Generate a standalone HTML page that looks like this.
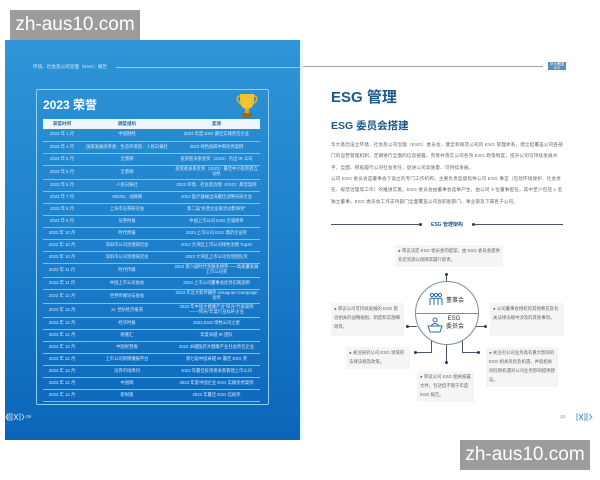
<!DOCTYPE html>
<html><head><meta charset="utf-8"><style>
*{margin:0;padding:0;box-sizing:border-box}
body{width:600px;height:480px;background:#fff;position:relative;overflow:hidden;font-family:"Liberation Sans","Noto Sans CJK SC",sans-serif}
.abs{position:absolute}
#left{left:5px;top:40px;width:295px;height:400px;background:linear-gradient(180deg,#2f95d6 0%,#1e80cc 50%,#0b64b9 100%)}
#right{left:300px;top:40px;width:300px;height:400px;background:#fff;border-left:3px solid #e6f6fb}
.wm{background:#9c9c9c;color:#fff;font-size:19px;line-height:30px;text-align:center;white-space:nowrap;overflow:hidden}
table{border-collapse:collapse;width:217px;color:#d8ecfb;font-size:4.3px;table-layout:fixed}
td{text-align:center;border-bottom:0.8px solid #7fc0ec;line-height:4.8px;height:12px;padding:0 1px}
td.tall{height:14px}
th{background:#eef6fc;color:#1a5f9c;font-size:4.5px;height:10px;font-weight:bold}
.p{font-size:4.6px;color:#666;line-height:11.3px;letter-spacing:0.15px}
.bx{background:#f3f5f7;font-size:4.4px;color:#666;line-height:9px;padding:1px 3px}
.dot{width:3px;height:3px;border-radius:50%;background:#2b3d4f;position:absolute}
.ln{background:#45586a;position:absolute}
</style></head><body>
<div id="left" class="abs"></div>
<div id="right" class="abs"></div>
<div class="abs wm" style="left:10px;top:10px;width:130px;height:30px">zh-aus10.com</div>
<div class="abs wm" style="left:460px;top:440px;width:130px;height:30px">zh-aus10.com</div>

<!-- left page -->
<div class="abs" style="left:33px;top:64px;font-size:4.6px;color:#d6ecfb">环境、社会及公司治理（ESG）报告</div>
<div class="abs" style="left:116px;top:67px;width:184px;height:0.8px;background:#8fcaf0"></div>
<div class="abs" style="left:36px;top:89px;width:233px;height:316px;border:0.8px solid #8fd0f5;border-radius:2px"></div>
<div class="abs" style="left:43px;top:96px;font-size:12px;font-weight:bold;color:#fff">2023 荣誉</div>
<svg class="abs" style="left:234px;top:91px" width="26" height="28" viewBox="0 0 26 28">
<path d="M6 3h14v7c0 5-3 8-7 8s-7-3-7-8z" fill="#f2c230"/>
<path d="M6 5c-4 0-4 6 2 8M20 5c4 0 4 6-2 8" fill="none" stroke="#e9b21e" stroke-width="1.5"/>
<rect x="11" y="18" width="4" height="4" fill="#e0a91a"/>
<rect x="8" y="22" width="10" height="5" fill="#9a6a1a"/>
</svg>
<div class="abs" style="left:43px;top:119px">
<table>
<colgroup><col style="width:38px"><col style="width:92px"><col style="width:87px"></colgroup>
<tr><th>获奖时间</th><th>颁奖组织</th><th>奖项</th></tr>
<tr><td>2023 年 1 月</td><td>中国财经</td><td>2022 年度 ESG 最佳实践责任企业</td></tr>
<tr><td>2023 年 4 月</td><td>国家发展改革委、生态环境部、人民日报社</td><td>2023 绿色低碳中和优秀案例</td></tr>
<tr><td>2023 年 5 月</td><td>全景网</td><td>投资者关系金奖（2022）杰出 IR 公司</td></tr>
<tr><td class="tall">2023 年 5 月</td><td class="tall">全景网</td><td class="tall">投资者关系金奖（2022）最佳中小投资者互动奖</td></tr>
<tr><td>2023 年 5 月</td><td>人民日报社</td><td>2023 环境、社会及治理（ESG）典型案例</td></tr>
<tr><td>2023 年 7 月</td><td>VB100、动脉网</td><td>2023 医疗器械出海最佳战略布局企业</td></tr>
<tr><td>2023 年 8 月</td><td>上海市证券研究会</td><td>第二届"民营企业家活动影响奖"</td></tr>
<tr><td>2023 年 9 月</td><td>证券时报</td><td>中国上市公司 ESG 百强榜单</td></tr>
<tr><td>2023 年 10 月</td><td>时代周报</td><td>2023 上市公司 ESG 典范企业奖</td></tr>
<tr><td>2022 年 10 月</td><td>深圳市公司治理研究会</td><td>2023 大湾区上市公司绿色治理 Top20</td></tr>
<tr><td>2023 年 10 月</td><td>深圳市公司治理研究会</td><td>2023 大湾区上市公司治理团队奖</td></tr>
<tr><td class="tall">2023 年 11 月</td><td class="tall">时代传媒</td><td class="tall">2023 第六届时代金融金榜奖——高质量发展上市公司奖</td></tr>
<tr><td>2023 年 11 月</td><td>中国上市公司协会</td><td>2023 上市公司董事会优秀实践案例</td></tr>
<tr><td class="tall">2023 年 12 月</td><td class="tall">世界传媒论坛协会</td><td class="tall">2023 年近大新传播奖 Instagram Campaign 金奖</td></tr>
<tr><td class="tall">2023 年 12 月</td><td class="tall">21 世纪经济报道</td><td class="tall">2023 年中国大健康产业"阳光"代表案例——"阳光"年度行业标杆企业</td></tr>
<tr><td>2023 年 12 月</td><td>经济时报</td><td>2023 ESG 绿色公司之星</td></tr>
<tr><td>2023 年 12 月</td><td>格隆汇</td><td>年度卓越 IR 团队</td></tr>
<tr><td>2023 年 12 月</td><td>中国经营报</td><td>2023 卓越医药大健康产业社会责任企业</td></tr>
<tr><td>2023 年 12 月</td><td>上市公司舆情播报平台</td><td>第七届中国卓越 IR 最佳 ESG 奖</td></tr>
<tr><td>2023 年 12 月</td><td>证券市场周刊</td><td>2023 年最佳投资者关系管理上市公司</td></tr>
<tr><td>2023 年 12 月</td><td>中国网</td><td>2023 年度中国企业 ESG 实践优秀案例</td></tr>
<tr><td>2023 年 12 月</td><td>新财富</td><td>2023 年最佳 ESG 信披奖</td></tr>
</table></div>
<svg class="abs" style="left:5px;top:412px" width="20" height="10" viewBox="0 0 20 10" fill="none" stroke="#cfe8fa" stroke-width="0.8">
<path d="M1 5l2-3v6zM5 1v8M7 1v8M9 2l4 6M13 2l-4 6M15 1v8M17 2l2 3-2 3"/></svg>
<div class="abs" style="left:26px;top:414px;font-size:4.6px;color:#cfe8fa">09</div>

<!-- right page -->
<div class="abs" style="left:303px;top:66px;width:240px;height:0.8px;background:#9aa7b2"></div>
<div class="abs" style="left:548px;top:62px;width:18px;height:8px;background:#5a8fc0;font-size:3.5px;color:#fff;line-height:4px;text-align:center">华大基因<br>BGI</div>
<div class="abs" style="left:331px;top:86px;font-size:15px;font-weight:bold;color:#1c5a8d">ESG 管理</div>
<div class="abs" style="left:331px;top:118px;font-size:10.5px;font-weight:bold;color:#1c5a8d">ESG 委员会搭建</div>
<div class="abs p" style="left:331px;top:139px;width:234px">华大基因设立环境、社会及公司治理（ESG）委员会，健全和规范公司的 ESG 管理体系，建立起覆盖公司各部门的运营管理机制，定期进行全面的信息披露，完善并落实公司各项 ESG 政策制度，提升公司可持续发展水平，全面、积极履行公司社会责任，促进公司高质量、可持续发展。</div>
<div class="abs p" style="left:331px;top:173px;width:234px">公司 ESG 委员会是董事会下设立的专门工作机构，主要负责监督指导公司 ESG 事宜（包括环境保护、社会责任、规范治理等工作）的推进实施。ESG 委员会由董事会选举产生，由公司 3 位董事担任，其中至少包括 1 名独立董事。ESG 委员会工作支持部门全面覆盖公司各职能部门、事业部及下属各子公司。</div>
<div class="abs" style="left:331px;top:224px;width:89px;height:0.8px;background:#45586a"></div>
<div class="dot" style="left:419px;top:223px"></div>
<div class="abs" style="left:431px;top:221px;font-size:5px;color:#1c5a8d;font-weight:bold">ESG 管理架构</div>
<div class="dot" style="left:472px;top:223px"></div>
<div class="abs" style="left:474px;top:224px;width:89px;height:0.8px;background:#45586a"></div>

<div class="abs bx" style="left:395px;top:245px;width:108px;height:22px">● 审议决定 ESG 委员会的提案，由 ESG 委员会提供充足资源以保障其履行职责。</div>
<div class="abs bx" style="left:331px;top:303px;width:73px;height:33px">● 审议公司可持续发展的 ESG 管治相关的战略规划、制度和实施细则等。</div>
<div class="abs bx" style="left:490px;top:303px;width:74px;height:33px">● 公司董事会授权的其他事宜及有关法律法规中涉及的其他事项。</div>
<div class="abs bx" style="left:346px;top:347px;width:64px;height:22px">● 关注研究公司 ESG 领域的法律法规及政策。</div>
<div class="abs bx" style="left:486px;top:347px;width:72px;height:40px">● 关注对公司业务具有重大影响的 ESG 相关风险及机遇，并就相关风险和机遇对公司业务影响提供建议。</div>
<div class="abs bx" style="left:417px;top:371px;width:57px;height:31px">● 审议公司 ESG 相关披露文件，包括但不限于年度 ESG 报告。</div>

<div class="dot" style="left:445px;top:273px"></div>
<div class="ln" style="left:446px;top:275px;width:1px;height:7px"></div>
<div class="dot" style="left:406px;top:325px"></div>
<div class="ln" style="left:408px;top:326px;width:9px;height:1px"></div>
<div class="dot" style="left:484px;top:325px"></div>
<div class="ln" style="left:476px;top:326px;width:9px;height:1px"></div>
<div class="ln" style="left:431px;top:340px;width:1px;height:12px"></div>
<div class="ln" style="left:416px;top:352px;width:16px;height:1px"></div>
<div class="dot" style="left:414px;top:351px"></div>
<div class="ln" style="left:462px;top:340px;width:1px;height:12px"></div>
<div class="ln" style="left:462px;top:352px;width:16px;height:1px"></div>
<div class="dot" style="left:477px;top:351px"></div>
<div class="ln" style="left:446px;top:344px;width:1px;height:18px"></div>
<div class="dot" style="left:445px;top:361px"></div>

<div class="abs" style="left:415px;top:281px;width:64px;height:64px;border-radius:50%;background:#fff;border:1px solid #7d8c99"></div>
<div class="abs" style="left:416px;top:313px;width:62px;height:1px;background:#7d8c99"></div>
<svg class="abs" style="left:429px;top:292px" width="14" height="14" viewBox="0 0 14 14" fill="none" stroke="#2d6fa8" stroke-width="1">
<circle cx="3" cy="3" r="1.6"/><circle cx="7" cy="3" r="1.6"/><circle cx="11" cy="3" r="1.6"/>
<path d="M1 13V7q2-2 4 0v6M5 13V7q2-2 4 0v6M9 13V7q2-2 4 0v6"/></svg>
<div class="abs" style="left:446px;top:295px;font-size:6px;color:#333">董事会</div>
<svg class="abs" style="left:427px;top:317px" width="16" height="16" viewBox="0 0 16 16" fill="none" stroke="#2d6fa8" stroke-width="1">
<circle cx="8" cy="3" r="2"/><path d="M4 9q4-5 8 0"/><path d="M1 9h14l-2 6H3z"/></svg>
<div class="abs" style="left:446px;top:316px;font-size:6px;color:#333;line-height:7.5px">&nbsp;ESG<br>委员会</div>

<div class="abs" style="left:560px;top:414px;font-size:4.6px;color:#8a8a8a">10</div>
<svg class="abs" style="left:576px;top:412px" width="18" height="10" viewBox="0 0 18 10" fill="none" stroke="#3a86c8" stroke-width="0.8">
<path d="M1 1v8M3 2l4 6M7 2l-4 6M9 1v8M11 1v8M13 2l3 3-3 3"/></svg>
</body></html>
